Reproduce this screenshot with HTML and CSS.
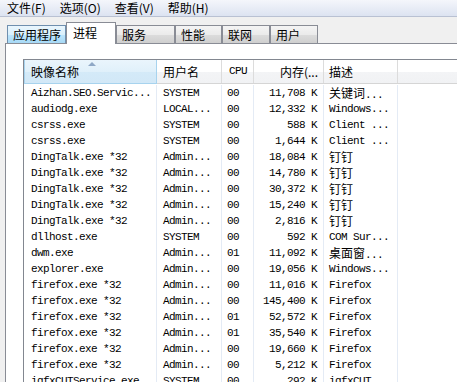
FILE: index.html
```html
<!DOCTYPE html>
<html lang="zh-CN">
<head>
  <meta charset="UTF-8" />
  <title>Windows 任务管理器</title>
  <link rel="stylesheet" href="styles.css">
</head>
<body>
  <div class="menubar">
    <span class="menu">文件(F)</span>
    <span class="menu">选项(O)</span>
    <span class="menu">查看(V)</span>
    <span class="menu">帮助(H)</span>
  </div>

  <div class="tabs">
    <div class="tab tab-apps hover">应用程序</div>
    <div class="tab tab-proc active">进程</div>
    <div class="tab tab-svc">服务</div>
    <div class="tab tab-perf">性能</div>
    <div class="tab tab-net">联网</div>
    <div class="tab tab-user">用户</div>
  </div>

  <div class="panel">
    <div class="listview">
      <div class="lv-header">
        <div class="hcell name sorted">映像名称</div>
        <div class="hcell user">用户名</div>
        <div class="hcell cpu mono">CPU</div>
        <div class="hcell mem">内存(...</div>
        <div class="hcell desc">描述</div>
        <div class="hcell fill"></div>
      </div>

      <div class="lv-body">
        <div class="row"><span class="c name">Aizhan.SEO.Servic...</span><span class="c user">SYSTEM</span><span class="c cpu">00</span><span class="c mem">11,708 K</span><span class="c desc"><span class="cn">关键词</span>...</span><span class="c fill"></span></div>
        <div class="row"><span class="c name">audiodg.exe</span><span class="c user">LOCAL...</span><span class="c cpu">00</span><span class="c mem">12,332 K</span><span class="c desc">Windows...</span><span class="c fill"></span></div>
        <div class="row"><span class="c name">csrss.exe</span><span class="c user">SYSTEM</span><span class="c cpu">00</span><span class="c mem">588 K</span><span class="c desc">Client ...</span><span class="c fill"></span></div>
        <div class="row"><span class="c name">csrss.exe</span><span class="c user">SYSTEM</span><span class="c cpu">00</span><span class="c mem">1,644 K</span><span class="c desc">Client ...</span><span class="c fill"></span></div>
        <div class="row"><span class="c name">DingTalk.exe *32</span><span class="c user">Admin...</span><span class="c cpu">00</span><span class="c mem">18,084 K</span><span class="c desc"><span class="cn">钉钉</span></span><span class="c fill"></span></div>
        <div class="row"><span class="c name">DingTalk.exe *32</span><span class="c user">Admin...</span><span class="c cpu">00</span><span class="c mem">14,780 K</span><span class="c desc"><span class="cn">钉钉</span></span><span class="c fill"></span></div>
        <div class="row"><span class="c name">DingTalk.exe *32</span><span class="c user">Admin...</span><span class="c cpu">00</span><span class="c mem">30,372 K</span><span class="c desc"><span class="cn">钉钉</span></span><span class="c fill"></span></div>
        <div class="row"><span class="c name">DingTalk.exe *32</span><span class="c user">Admin...</span><span class="c cpu">00</span><span class="c mem">15,240 K</span><span class="c desc"><span class="cn">钉钉</span></span><span class="c fill"></span></div>
        <div class="row"><span class="c name">DingTalk.exe *32</span><span class="c user">Admin...</span><span class="c cpu">00</span><span class="c mem">2,816 K</span><span class="c desc"><span class="cn">钉钉</span></span><span class="c fill"></span></div>
        <div class="row"><span class="c name">dllhost.exe</span><span class="c user">SYSTEM</span><span class="c cpu">00</span><span class="c mem">592 K</span><span class="c desc">COM Sur...</span><span class="c fill"></span></div>
        <div class="row"><span class="c name">dwm.exe</span><span class="c user">Admin...</span><span class="c cpu">01</span><span class="c mem">11,092 K</span><span class="c desc"><span class="cn">桌面窗</span>...</span><span class="c fill"></span></div>
        <div class="row"><span class="c name">explorer.exe</span><span class="c user">Admin...</span><span class="c cpu">00</span><span class="c mem">19,056 K</span><span class="c desc">Windows...</span><span class="c fill"></span></div>
        <div class="row"><span class="c name">firefox.exe *32</span><span class="c user">Admin...</span><span class="c cpu">00</span><span class="c mem">11,016 K</span><span class="c desc">Firefox</span><span class="c fill"></span></div>
        <div class="row"><span class="c name">firefox.exe *32</span><span class="c user">Admin...</span><span class="c cpu">00</span><span class="c mem">145,400 K</span><span class="c desc">Firefox</span><span class="c fill"></span></div>
        <div class="row"><span class="c name">firefox.exe *32</span><span class="c user">Admin...</span><span class="c cpu">01</span><span class="c mem">52,572 K</span><span class="c desc">Firefox</span><span class="c fill"></span></div>
        <div class="row"><span class="c name">firefox.exe *32</span><span class="c user">Admin...</span><span class="c cpu">01</span><span class="c mem">35,540 K</span><span class="c desc">Firefox</span><span class="c fill"></span></div>
        <div class="row"><span class="c name">firefox.exe *32</span><span class="c user">Admin...</span><span class="c cpu">00</span><span class="c mem">19,660 K</span><span class="c desc">Firefox</span><span class="c fill"></span></div>
        <div class="row"><span class="c name">firefox.exe *32</span><span class="c user">Admin...</span><span class="c cpu">00</span><span class="c mem">5,212 K</span><span class="c desc">Firefox</span><span class="c fill"></span></div>
        <div class="row"><span class="c name">igfxCUTService.exe</span><span class="c user">SYSTEM</span><span class="c cpu">00</span><span class="c mem">292 K</span><span class="c desc">igfxCUT...</span><span class="c fill"></span></div>
      </div>
    </div>
  </div>
</body>
</html>
```

FILE: styles.css
```css
* {
  box-sizing: border-box;
}
html, body {
  margin: 0;
  padding: 0;
  overflow: hidden;
  height: 100%;
}
body {
  font-family: "Noto Sans CJK SC", sans-serif;
  font-size: 12px;
  color: #000;
  background: #f0f0f0;
}

/* Menu bar */
.menubar {
  display: flex;
  height: 17px;
  background: linear-gradient(#f4f6fb, #dce3f1);
  border-bottom: 1px solid #b9c1d3;
}
.menu {
  padding: 0 7px;
  line-height: 16px;
}

/* Tabs */
.tabs {
  display: flex;
  align-items: flex-end;
  height: 22px;
  margin-top: 5px;
  padding-left: 7px;
}
.tab {
  height: 18px;
  margin-bottom: 1px;
  padding-left: 5px;
  line-height: 17px;
  border: 1px solid #898c95;
  border-bottom: none;
  background: linear-gradient(#f4f4f4 0%, #ebebeb 50%, #dddddd 50%, #cfcfcf 100%);
}
.tab.hover {
  border-color: #6f8fae;
  background: linear-gradient(#eaf6fd 0%, #d9f0fc 50%, #bee6fd 50%, #a7d9f5 100%);
}
.tab.active {
  position: relative;
  z-index: 1;
  height: 22px;
  margin-bottom: 0;
  padding-left: 6px;
  line-height: 20px;
  background: #fff;
}
.tab-apps { width: 59px; }
.tab-proc { width: 50px; }
.tab-svc  { width: 59px; }
.tab-perf { width: 47px; }
.tab-net  { width: 48px; }
.tab-user { width: 48px; }

/* Tab page */
.panel {
  width: 520px;
  height: 600px;
  margin-top: -1px;
  margin-left: 5px;
  padding: 15px 0 0 17px;
  background: #fff;
  border: 1px solid #898c95;
}
.listview {
  height: 100%;
  border-top: 1px solid #828790;
  border-left: 1px solid #828790;
  background: #fff;
}

/* Column layout shared by header and rows */
.lv-header,
.row {
  display: grid;
  grid-template-columns: 133px 65px 32px 70px 74px 1fr;
}

.lv-header {
  height: 24px;
  border-bottom: 1px solid #d5d5d5;
}
.hcell {
  line-height: 23px;
  padding-left: 7px;
  white-space: nowrap;
  border-right: 1px solid #dcdcdc;
  background: linear-gradient(#ffffff 0%, #ffffff 50%, #f3f4f6 50%, #f1f2f4 100%);
}
.hcell.sorted {
  position: relative;
  margin-bottom: -1px;
  border: 1px solid #a7d3ee;
  border-top: none;
  background: linear-gradient(#eaf5fc 0%, #e0f0fa 50%, #d4eaf8 50%, #d2e8f7 100%);
  padding-left: 6px;
}
.hcell.sorted::before {
  content: "";
  position: absolute;
  top: 2px;
  left: 63px;
  border-left: 4px solid transparent;
  border-right: 4px solid transparent;
  border-bottom: 4px solid #8fa8c6;
}
.hcell.user { padding-left: 6px; }
.hcell.cpu { padding-left: 7px; }
.hcell.mem {
  padding-left: 0;
  padding-right: 5px;
  text-align: right;
}
.hcell.desc { padding-left: 5px; }
.hcell.fill { border-right: none; }

.mono {
  font-family: "Liberation Mono", monospace;
  font-size: 11px;
  letter-spacing: -0.6px;
}

/* Rows */
.lv-body {
  padding-top: 1px;
}
.row {
  height: 16px;
}
.c {
  font-family: "Liberation Mono", "Noto Sans CJK SC", monospace;
  font-size: 11px;
  letter-spacing: -0.6px;
  line-height: 16px;
  white-space: nowrap;
  overflow: hidden;
  border-right: 1px solid #e4ebf5;
}
.c.name { padding-left: 7px; }
.c.user { padding-left: 6px; }
.c.cpu { padding-left: 5px; }
.c.mem {
  padding-right: 6px;
  text-align: right;
}
.c.desc { padding-left: 5px; }
.c.fill { border-right: none; }
.cn {
  font-family: "Noto Sans CJK SC", sans-serif;
  font-size: 12px;
  letter-spacing: 0;
}
```
